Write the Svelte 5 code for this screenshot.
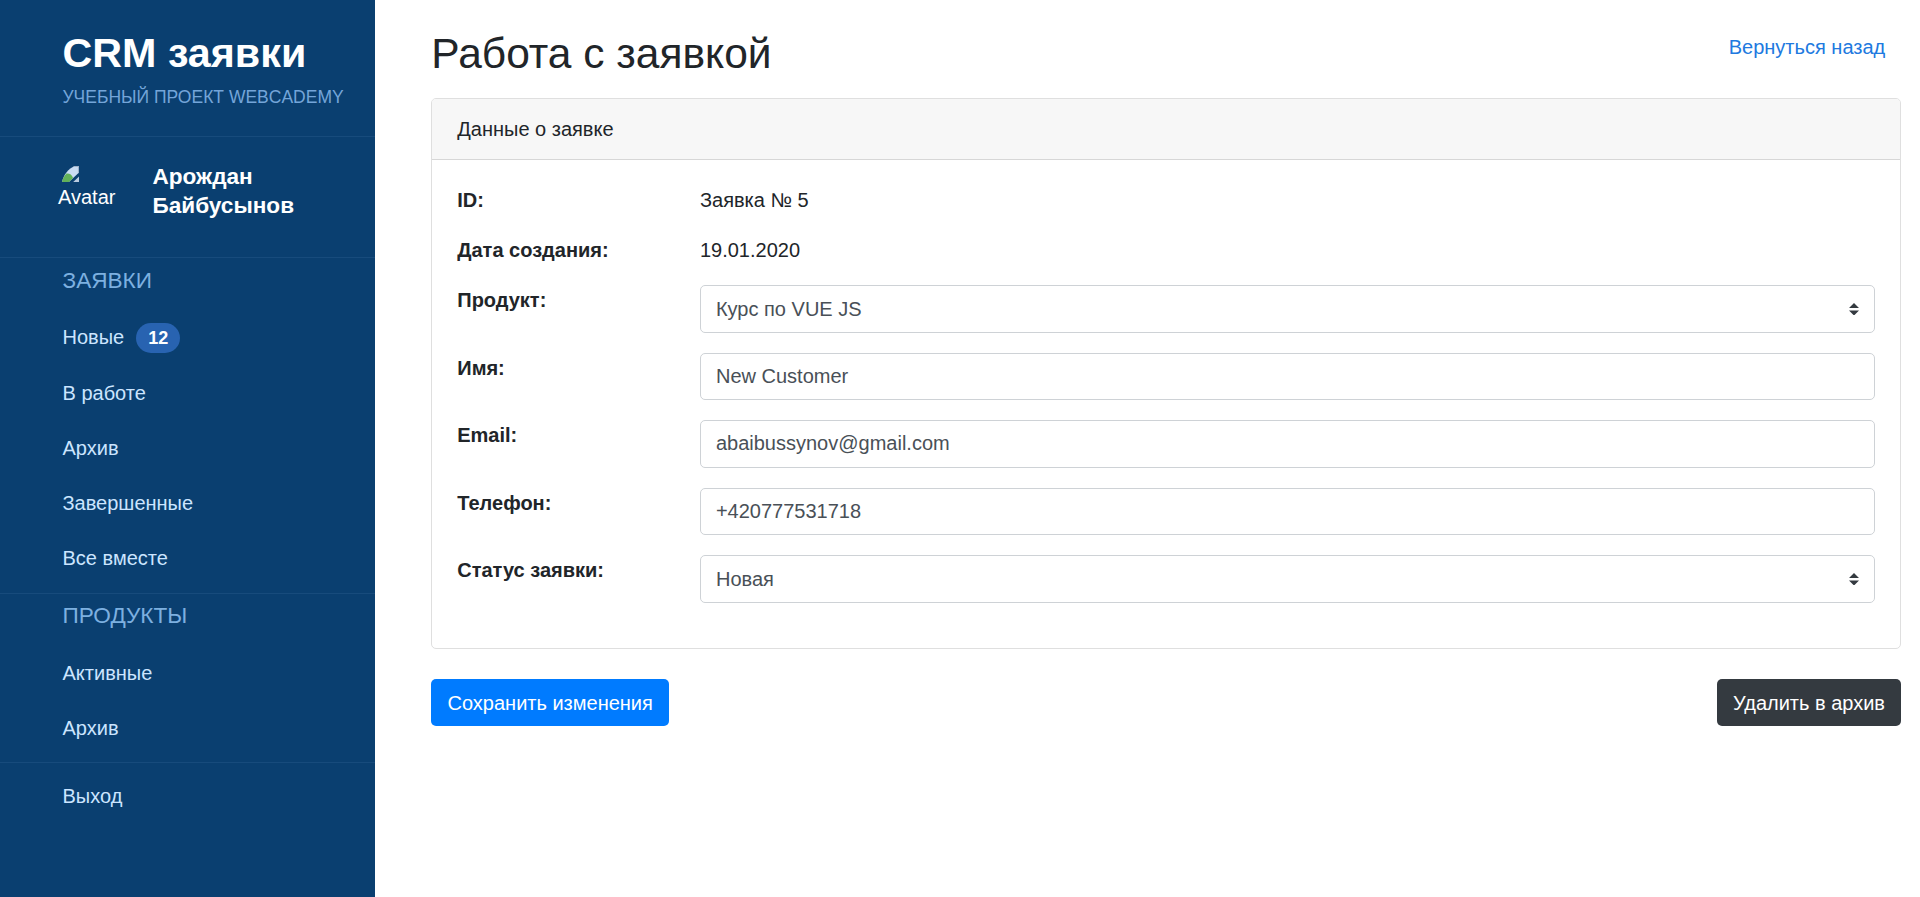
<script>
  const groups = [
    {
      title: 'Заявки',
      items: [
        { label: 'Новые', count: 12 },
        { label: 'В работе' },
        { label: 'Архив' },
        { label: 'Завершенные' },
        { label: 'Все вместе' }
      ]
    },
    { title: 'Продукты', items: [{ label: 'Активные' }, { label: 'Архив' }] }
  ];

  const fields = [
    { label: 'ID:', kind: 'text', value: 'Заявка № 5' },
    { label: 'Дата создания:', kind: 'text', value: '19.01.2020' },
    { label: 'Продукт:', kind: 'select', value: 'Курс по VUE JS' },
    { label: 'Имя:', kind: 'input', value: 'New Customer' },
    { label: 'Email:', kind: 'input', value: 'abaibussynov@gmail.com' },
    { label: 'Телефон:', kind: 'input', value: '+420777531718' },
    { label: 'Статус заявки:', kind: 'select', value: 'Новая' }
  ];
</script>

<div class="layout">
  <aside class="sidebar">
    <header class="brand">
      <div class="brand-title">CRM заявки</div>
      <div class="brand-sub">Учебный проект WebCademy</div>
    </header>

    <div class="user">
      <div class="avatar">
        <svg width="17" height="16" viewBox="0 0 16 16" preserveAspectRatio="none" aria-hidden="true">
          <path d="M0 16C1.6 8.5 6 2.6 12 0H16V6.5L6.5 16Z" fill="#c9dcf3" />
          <path d="M0 16C.7 12.6 2.2 9.8 4.2 7.6C7 7.2 9.2 8.6 10.4 12L6.5 16Z" fill="#62b158" />
          <path d="M12 0H16V6.5L15 7.5V1H10Z" fill="#9db1c9" />
          <path d="M10.5 16L16 10.5V16Z" fill="#b9cbe0" />
        </svg>
        <span>Avatar</span>
      </div>
      <div class="user-name">Арождан<br />Байбусынов</div>
    </div>

    {#each groups as group}
      <nav class="group">
        <div class="group-title">{group.title}</div>
        {#each group.items as item}
          <a class="nav-item" class:counted={item.count} href="#top">
            {item.label}
            {#if item.count}<span class="badge">{item.count}</span>{/if}
          </a>
        {/each}
      </nav>
    {/each}

    <nav class="group logout">
      <a class="nav-item" href="#top">Выход</a>
    </nav>
  </aside>

  <main class="content">
    <div class="page-head">
      <h1>Работа с заявкой</h1>
      <a class="back" href="#top">Вернуться назад</a>
    </div>

    <section class="card">
      <div class="card-header">Данные о заявке</div>
      <div class="card-body">
        {#each fields as field}
          <div class="row">
            <strong>{field.label}</strong>
            {#if field.kind === 'text'}
              <div class="plain">{field.value}</div>
            {:else if field.kind === 'select'}
              <div class="control select">
                <span>{field.value}</span>
                <svg width="10" height="12.5" viewBox="0 0 4 5" aria-hidden="true">
                  <path fill="#343a40" d="M2 0L0 2h4zm0 5L0 3h4z" />
                </svg>
              </div>
            {:else}
              <input class="control" type="text" value={field.value} />
            {/if}
          </div>
        {/each}
      </div>
    </section>

    <div class="actions">
      <button class="btn save" type="button">Сохранить изменения</button>
      <button class="btn archive" type="button">Удалить в архив</button>
    </div>
  </main>
</div>

<style>
  :global(body) {
    margin: 0;
    background: #fff;
  }

  .layout {
    display: grid;
    grid-template-columns: 375px 1fr;
    height: 897px;
    overflow: hidden;
    box-sizing: border-box;
    color: #212529;
    font: 20px/30px Arial, 'Liberation Sans', sans-serif;
  }

  .layout * {
    box-sizing: border-box;
  }

  a {
    text-decoration: none;
  }

  .sidebar {
    background: #0a3f70;
    color: #fff;
  }

  .brand {
    height: 136px;
    padding: 28px 0 0 62.5px;
    white-space: nowrap;
  }

  .brand-title {
    font-size: 41.25px;
    font-weight: 700;
    line-height: 50px;
  }

  .brand-sub {
    margin-top: 6px;
    color: #74a5d9;
    font-size: 17.5px;
    line-height: 26px;
    text-transform: uppercase;
  }

  .user {
    display: flex;
    height: 121px;
    border-top: 1px solid #174b7c;
    padding: 25px 0 0 58px;
  }

  .avatar {
    display: flex;
    flex-direction: column;
    width: 94.5px;
    padding-top: 4px;
    line-height: 30px;
  }

  .avatar svg {
    margin-left: 4px;
    flex: none;
  }

  .user-name {
    font-size: 22.6px;
    font-weight: 700;
    line-height: 29px;
  }

  .group {
    border-top: 1px solid #174b7c;
    padding: 5.5px 0 7px;
  }

  .group-title {
    padding: 0 0 12.5px 62.5px;
    color: #7db0e0;
    font-size: 22.6px;
    line-height: 33.5px;
    text-transform: uppercase;
  }

  .nav-item {
    display: flex;
    align-items: center;
    height: 55px;
    padding-left: 62.5px;
    color: #cce5ff;
  }

  .counted {
    margin-bottom: 1px;
  }

  .logout {
    padding-top: 5px;
  }

  .badge {
    width: 44px;
    height: 30px;
    margin: 1px 0 -1px 12px;
    border-radius: 15px;
    background: #2863b1;
    color: #fff;
    font-size: 18px;
    font-weight: 700;
    line-height: 30px;
    text-align: center;
  }

  .content {
    padding: 0 18.75px 0 56.25px;
  }

  .page-head {
    display: flex;
    justify-content: space-between;
    height: 98px;
    padding-top: 28px;
  }

  h1 {
    margin: 0;
    font-size: 42.5px;
    font-weight: 400;
    line-height: 52px;
  }

  .back {
    margin: 4px 16px 0 0;
    color: #2079e0;
  }

  .card {
    border: 1px solid #dfdfdf;
    border-radius: 5px;
    overflow: hidden;
  }

  .card-header {
    height: 61px;
    border-bottom: 1px solid #d7d7d7;
    padding: 15px 25px;
    background: #f7f7f7;
  }

  .card-body {
    display: flex;
    flex-direction: column;
    gap: 20px;
    padding: 25px 25px 45.5px;
  }

  .row {
    display: grid;
    grid-template-columns: 242.7px 1fr;
  }

  .control {
    width: 100%;
    height: 47.5px;
    border: 1px solid #ced2d6;
    border-radius: 5px;
    padding: 0 15px;
    background: #fff;
    color: #495057;
    font: inherit;
  }

  .select {
    display: flex;
    align-items: center;
    justify-content: space-between;
  }

  .actions {
    display: flex;
    justify-content: space-between;
    margin-top: 30px;
  }

  .btn {
    height: 47px;
    border: 0;
    border-radius: 5px;
    padding: 0 16.25px;
    color: #fff;
    font: inherit;
  }

  .save {
    background: #007bff;
  }

  .archive {
    background: #343a40;
  }
</style>
